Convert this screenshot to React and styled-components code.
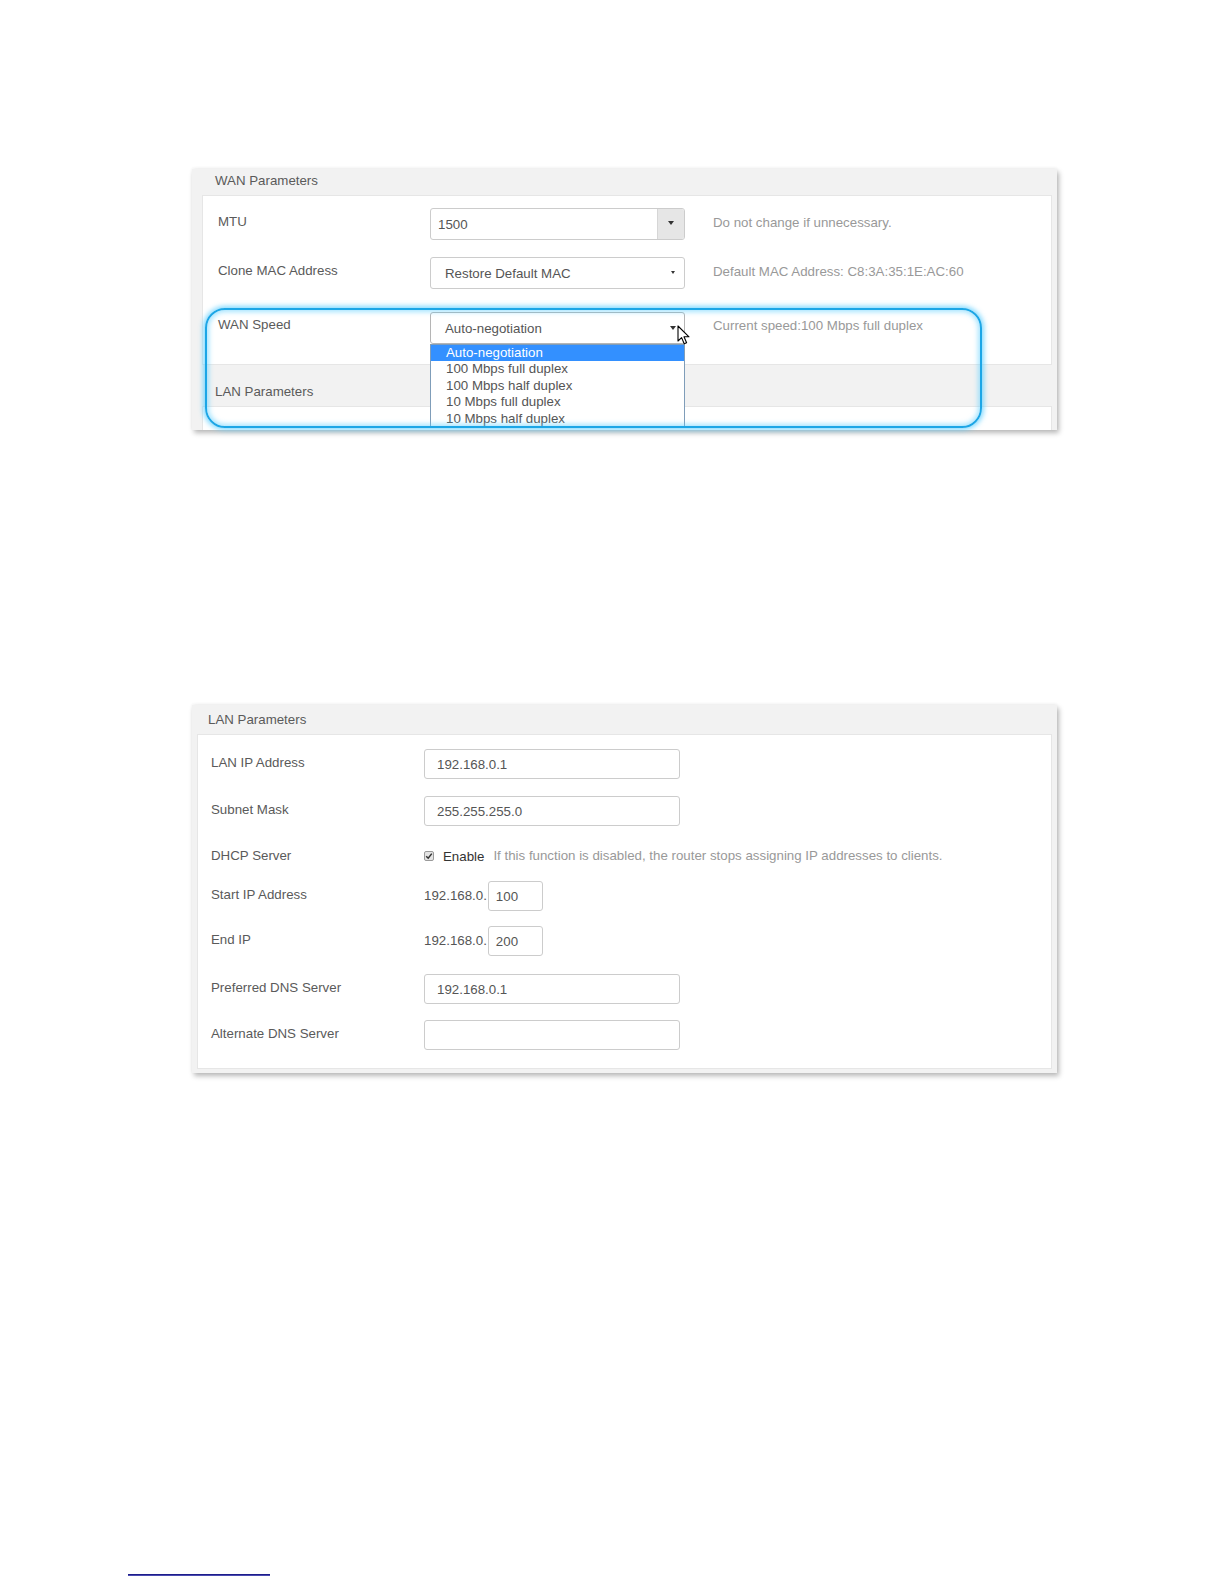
import { createGlobalStyle, styled } from "styled-components";

const GlobalStyle = createGlobalStyle`
  html, body {
    margin: 0;
    padding: 0;
    background: #ffffff;
  }
  body {
    font-family: "Liberation Sans", Arial, sans-serif;
    font-size: 13.3px;
    color: #555;
  }
`;

const Page = styled.div`
  width: 1224px;
  height: 1584px;
  display: flex;
  flex-direction: column;
  align-items: flex-start;
  overflow: hidden;
`;

const Shot = styled.div`
  position: relative;
  margin-left: 192px;
  margin-top: ${(p) => p.$top}px;
  width: 865px;
`;

const Frame = styled.div`
  width: 100%;
  height: ${(p) => p.$height}px;
  background: #f2f2f2;
  box-shadow: 2px 3px 5px rgba(0, 0, 0, 0.28), 0 -1px 3px rgba(0, 0, 0, 0.05);
  overflow: hidden;
  display: flex;
  flex-direction: column;
`;

const FrameHeader = styled.div`
  height: ${(p) => p.$h}px;
  padding-left: ${(p) => p.$pl}px;
  padding-top: ${(p) => p.$pt}px;
  box-sizing: border-box;
  line-height: 16px;
  color: #5a5a5a;
  flex-shrink: 0;
`;

const Card = styled.div`
  margin: 0 ${(p) => p.$mr}px 0 ${(p) => p.$ml}px;
  background: #fff;
  border: 1px solid #e6e6e6;
  padding: ${(p) => p.$pt}px 0 ${(p) => p.$pb}px ${(p) => p.$pl}px;
  flex-shrink: 0;
  height: ${(p) => (p.$h ? `${p.$h}px` : "auto")};
  box-sizing: border-box;
`;

const Row = styled.div`
  display: flex;
  align-items: flex-start;
  height: ${(p) => p.$h || 32}px;
  margin-bottom: ${(p) => p.$mb || 0}px;
  position: relative;
`;

const Label = styled.div`
  width: ${(p) => p.$w}px;
  flex-shrink: 0;
  padding-top: ${(p) => p.$pt ?? 6}px;
  line-height: 16px;
  color: #5a5a5a;
`;

const Box = styled.div`
  position: relative;
  width: ${(p) => p.$w}px;
  height: ${(p) => p.$h}px;
  box-sizing: border-box;
  border: 1px solid ${(p) => p.$border || "#cccccc"};
  border-radius: 3px;
  background: #fff;
  display: flex;
  align-items: center;
  padding-left: ${(p) => p.$pl}px;
  color: #555;
  flex-shrink: 0;
  overflow: visible;
`;

const CaretButton = styled.div`
  position: absolute;
  right: 0;
  top: 0;
  bottom: 0;
  width: 26px;
  background: #e6e6e6;
  border-left: 1px solid #d6d6d6;
  border-radius: 0 2px 2px 0;
  display: flex;
  align-items: center;
  justify-content: center;
`;

const Caret = styled.span`
  position: ${(p) => (p.$abs ? "absolute" : "static")};
  right: ${(p) => p.$right || 0}px;
  top: 50%;
  margin-top: -2px;
  width: 0;
  height: 0;
  border-left: ${(p) => p.$s}px solid transparent;
  border-right: ${(p) => p.$s}px solid transparent;
  border-top: ${(p) => p.$s + 1}px solid #333;
`;

const Hint = styled.div`
  margin-left: ${(p) => p.$ml}px;
  line-height: 16px;
  padding-top: ${(p) => p.$pt ?? 7}px;
  color: #999;
  white-space: nowrap;
`;

const List = styled.ul`
  position: absolute;
  left: -1px;
  top: 31px;
  width: 255px;
  margin: 0;
  padding: 0;
  list-style: none;
  background: #fff;
  border: 1px solid #7f9db9;
  box-sizing: border-box;
  z-index: 3;
`;

const Option = styled.li`
  height: 16.4px;
  line-height: 16.4px;
  padding-left: 15px;
  color: ${(p) => (p.$active ? "#fff" : "#555")};
  background: ${(p) => (p.$active ? "#3390ff" : "transparent")};
  white-space: nowrap;
`;

const Highlight = styled.div`
  position: absolute;
  left: 13px;
  top: 139px;
  width: 777px;
  height: 120px;
  box-sizing: border-box;
  border: 2px solid #1ca6e6;
  border-radius: 20px;
  box-shadow: 0 0 5px 2px rgba(90, 205, 255, 0.75),
    inset 0 0 5px 2px rgba(90, 205, 255, 0.55);
  pointer-events: none;
  z-index: 4;
`;

const Cursor = styled.svg`
  position: absolute;
  left: 485px;
  top: 156px;
  width: 14px;
  height: 21px;
  z-index: 5;
`;

const Prefix = styled.span`
  padding-top: 7px;
  line-height: 16px;
  margin-right: 1px;
  color: #555;
`;

const CheckWrap = styled.div`
  display: flex;
  align-items: center;
  height: 20px;
`;

const Check = styled.span`
  width: 10px;
  height: 10px;
  box-sizing: border-box;
  border: 1px solid #9a9a9a;
  border-radius: 2px;
  background: #e4e4e4;
  display: flex;
  align-items: center;
  justify-content: center;
  margin-right: 9px;
`;

const Enable = styled.span`
  color: #333;
  margin-right: 9px;
`;

const FootLine = styled.div`
  margin-top: 501px;
  margin-left: 128px;
  width: 142px;
  height: 1px;
  background: #1d1d8a;
  border-bottom: 1px solid #4a4ab0;
`;

const speeds = [
  "Auto-negotiation",
  "100 Mbps full duplex",
  "100 Mbps half duplex",
  "10 Mbps full duplex",
  "10 Mbps half duplex",
];

const lanRows = [
  { label: "LAN IP Address", value: "192.168.0.1", mb: 17 },
  { label: "Subnet Mask", value: "255.255.255.0", mb: 20 },
];

const dnsRows = [
  { label: "Preferred DNS Server", value: "192.168.0.1", mb: 16 },
  { label: "Alternate DNS Server", value: "", mb: 0 },
];

const WanShot = () => (
  <Shot $top={169}>
    <Frame $height={261}>
      <FrameHeader $h={26} $pl={23} $pt={4}>
        WAN Parameters
      </FrameHeader>
      <Card $ml={10} $mr={5} $pt={12} $pb={20} $pl={15}>
        <Row $mb={17}>
          <Label $w={212}>MTU</Label>
          <Box $w={255} $h={32} $pl={7}>
            1500
            <CaretButton>
              <Caret $s={3} />
            </CaretButton>
          </Box>
          <Hint $ml={28}>Do not change if unnecessary.</Hint>
        </Row>
        <Row $mb={23}>
          <Label $w={212}>Clone MAC Address</Label>
          <Box $w={255} $h={32} $pl={14}>
            Restore Default MAC
            <Caret $abs $right={9} $s={2.5} />
          </Box>
          <Hint $ml={28}>Default MAC Address: C8:3A:35:1E:AC:60</Hint>
        </Row>
        <Row>
          <Label $w={212} $pt={5}>
            WAN Speed
          </Label>
          <Box $w={255} $h={32} $pl={14} $border="#b5b5b5">
            Auto-negotiation
            <Caret $abs $right={8} $s={3} />
            <List>
              {speeds.map((s, i) => (
                <Option key={s} $active={i === 0}>
                  {s}
                </Option>
              ))}
            </List>
          </Box>
          <Hint $ml={28} $pt={6}>
            Current speed:100 Mbps full duplex
          </Hint>
        </Row>
      </Card>
      <FrameHeader $h={41} $pl={23} $pt={19}>
        LAN Parameters
      </FrameHeader>
      <Card $ml={10} $mr={5} $pt={0} $pb={0} $pl={0} $h={30} />
    </Frame>
    <Highlight />
    <Cursor viewBox="0 0 14 21">
      <path
        d="M1 1 L1 16 L4.6 12.6 L7.2 18.8 L9.6 17.8 L7 11.8 L12 11.8 Z"
        fill="#fff"
        stroke="#000"
        strokeWidth="1.1"
        strokeLinejoin="round"
      />
    </Cursor>
  </Shot>
);

const LanShot = () => (
  <Shot $top={275}>
    <Frame $height={368}>
      <FrameHeader $h={29} $pl={16} $pt={7}>
        LAN Parameters
      </FrameHeader>
      <Card $ml={5} $mr={5} $pt={14} $pb={18} $pl={13}>
        {lanRows.map((r) => (
          <Row key={r.label} $h={30} $mb={r.mb}>
            <Label $w={213}>{r.label}</Label>
            <Box $w={256} $h={30} $pl={12}>
              {r.value}
            </Box>
          </Row>
        ))}
        <Row $h={20} $mb={15}>
          <Label $w={213} $pt={2}>
            DHCP Server
          </Label>
          <CheckWrap>
            <Check>
              <svg width="8" height="8" viewBox="0 0 8 8">
                <path
                  d="M1.2 4.2 L3.2 6.2 L6.8 1.6"
                  fill="none"
                  stroke="#333"
                  strokeWidth="1.5"
                />
              </svg>
            </Check>
            <Enable>Enable</Enable>
            <Hint $ml={0} $pt={0}>
              If this function is disabled, the router stops assigning IP
              addresses to clients.
            </Hint>
          </CheckWrap>
        </Row>
        <Row $h={30} $mb={15}>
          <Label $w={213}>Start IP Address</Label>
          <Prefix>192.168.0.</Prefix>
          <Box $w={55} $h={30} $pl={7}>
            100
          </Box>
        </Row>
        <Row $h={30} $mb={18}>
          <Label $w={213}>End IP</Label>
          <Prefix>192.168.0.</Prefix>
          <Box $w={55} $h={30} $pl={7}>
            200
          </Box>
        </Row>
        {dnsRows.map((r) => (
          <Row key={r.label} $h={30} $mb={r.mb}>
            <Label $w={213}>{r.label}</Label>
            <Box $w={256} $h={30} $pl={12}>
              {r.value}
            </Box>
          </Row>
        ))}
      </Card>
    </Frame>
  </Shot>
);

export default function App() {
  return (
    <>
      <GlobalStyle />
      <Page>
        <WanShot />
        <LanShot />
        <FootLine />
      </Page>
    </>
  );
}
